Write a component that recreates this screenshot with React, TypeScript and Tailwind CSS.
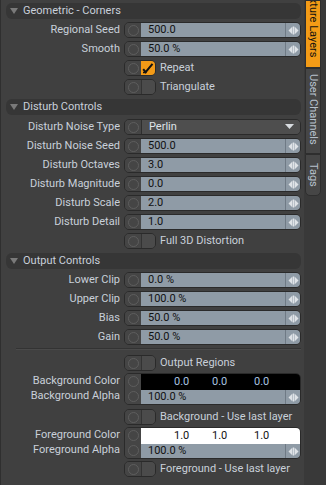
import React from "react";

const font = { fontFamily: "Roboto, 'Liberation Sans', sans-serif" };

function Arrows() {
  return (
    <div className="flex w-[15px] shrink-0 items-center justify-center border-l border-[#6f7a85] bg-[#8f9ba6]">
      <svg width="11" height="9" viewBox="0 0 11 9">
        <path d="M4.5 0.5 L0.5 4.5 L4.5 8.5 Z" fill="#dfe3e7" />
        <rect x="5" y="0.5" width="1" height="8" fill="#dfe3e7" />
        <path d="M6.5 0.5 L10.5 4.5 L6.5 8.5 Z" fill="#dfe3e7" />
      </svg>
    </div>
  );
}

function Knob() {
  return (
    <div className="flex w-[16px] shrink-0 items-center justify-center bg-[#454545]">
      <div className="h-[11px] w-[11px] rounded-full border border-[#5e5e5e]" />
    </div>
  );
}

function Label({ text }: { text: string }) {
  return (
    <div className="w-[119px] shrink-0 truncate text-right text-[11px] text-[#c9d0da]">{text}</div>
  );
}

function NumRow({ label, value, mt = "mt-[3px]" }: { label: string; value: string; mt?: string }) {
  return (
    <div className={`flex h-[16px] items-center ${mt}`}>
      <Label text={label} />
      <div className="ml-[4px] flex h-[16px] w-[177px] overflow-hidden rounded-[5px] border border-[#2a2a2a]">
        <Knob />
        <div className="flex flex-1 items-center bg-[#8f9ba6] pl-[7px] text-[11px] text-[#111]">{value}</div>
        <Arrows />
      </div>
    </div>
  );
}

function DropRow({ label, value }: { label: string; value: string }) {
  return (
    <div className="mt-[4px] flex h-[16px] items-center">
      <Label text={label} />
      <div className="ml-[4px] flex h-[16px] w-[177px] overflow-hidden rounded-[5px] border border-[#2a2a2a]">
        <Knob />
        <div className="flex flex-1 items-center justify-between border-l border-[#2e2e2e] bg-[#4e4e4e] pl-[7px] pr-[6px] text-[11px] text-[#dfe3e8]">
          <span>{value}</span>
          <svg width="9" height="6" viewBox="0 0 9 6">
            <path d="M0 0 L9 0 L4.5 5 Z" fill="#d8dce0" />
          </svg>
        </div>
      </div>
    </div>
  );
}

function Toggle({ label, checked = false, mt = "mt-[3px]" }: { label: string; checked?: boolean; mt?: string }) {
  return (
    <div className={`flex h-[16px] items-center ${mt}`}>
      <div className="w-[119px] shrink-0" />
      <div className="ml-[4px] flex h-[16px] w-[32px] overflow-hidden rounded-[5px] border border-[#2a2a2a]">
        <Knob />
        {checked ? (
          <div className="flex flex-1 items-center justify-center bg-[#f29a17]">
            <svg width="12" height="11" viewBox="0 0 12 11">
              <path d="M10.5 0.8 L3.6 9.2 L1.2 6.2" stroke="#111" strokeWidth="2" fill="none" />
              <path d="M1 9.5 L4.5 9.5" stroke="#111" strokeWidth="1.6" />
            </svg>
          </div>
        ) : (
          <div className="flex-1 border-l border-[#333] bg-[#4b4b4b]" />
        )}
      </div>
      <span className="ml-[4px] text-[11px] text-[#c9d0da]">{label}</span>
    </div>
  );
}

function Header({ title, mt }: { title: string; mt: string }) {
  return (
    <div className={`ml-[5px] flex h-[16px] w-[295px] items-center rounded-[6px] bg-[#363636] ${mt}`}>
      <svg className="ml-[4px]" width="8" height="6" viewBox="0 0 8 6">
        <path d="M0 0 L8 0 L4 6 Z" fill="#7a7a7a" />
      </svg>
      <span className="ml-[5px] text-[11px] text-[#c9d0da]">{title}</span>
    </div>
  );
}

function ColorGroup({ label, alpha, values, dark, mt }: { label: string; alpha: string; values: string[]; dark: boolean; mt: string }) {
  return (
    <div className={`flex ${mt}`}>
      <div className="flex w-[119px] shrink-0 flex-col">
        <div className="flex h-[16px] items-center justify-end text-[11px] text-[#c9d0da]">{label}</div>
        <div className="flex h-[15px] items-center justify-end text-[11px] text-[#c9d0da]">
          {label.replace("Color", "Alpha")}
        </div>
      </div>
      <div className="ml-[4px] flex h-[32px] w-[177px] overflow-hidden rounded-[5px] border border-[#2a2a2a]">
        <div className="flex w-[16px] shrink-0 flex-col bg-[#454545]">
          <div className="flex h-[16px] items-center justify-center">
            <div className="h-[11px] w-[11px] rounded-full border border-[#5e5e5e]" />
          </div>
          <div className="flex h-[15px] items-center justify-center">
            <div className="h-[11px] w-[11px] rounded-full border border-[#5e5e5e]" />
          </div>
        </div>
        <div className="flex flex-1 flex-col">
          <div
            className={`flex h-[16px] items-center text-[11px] ${dark ? "bg-black text-[#a9c4e0]" : "bg-white text-[#111]"}`}
          >
            <span className="ml-[33px] w-[38px]">{values[0]}</span>
            <span className="w-[42px]">{values[1]}</span>
            <span>{values[2]}</span>
          </div>
          <div className="flex h-[15px]">
            <div className="flex flex-1 items-center bg-[#8f9ba6] pl-[7px] text-[11px] text-[#111]">{alpha}</div>
            <Arrows />
          </div>
        </div>
      </div>
    </div>
  );
}

function Tab({ text, active, h, last }: { text: string; active?: boolean; h: string; last?: boolean }) {
  return (
    <div
      className={`flex w-[16px] flex-col items-center justify-end overflow-hidden border border-[#2e2e2e] ${h} ${
        active ? "bg-[#f39b16] text-[#111] pb-[10px]" : "bg-[#464646] text-[#b7c1cd] pb-[8px]"
      } ${last ? "rounded-b-[5px]" : ""}`}
    >
      <span className="shrink-0 whitespace-nowrap text-[11px] leading-[14px] [writing-mode:vertical-rl]">{text}</span>
    </div>
  );
}

export default function App() {
  return (
    <div className="flex h-[485px] w-[326px] overflow-hidden bg-[#404040]" style={font}>
      <div className="flex w-[304px] shrink-0 flex-col border-l border-[#2f2f2f]">
        <Header title="Geometric - Corners" mt="mt-[3px]" />
        <NumRow label="Regional Seed" value="500.0" />
        <NumRow label="Smooth" value="50.0 %" />
        <Toggle label="Repeat" checked />
        <Toggle label="Triangulate" />

        <Header title="Disturb Controls" mt="mt-[4px]" />
        <DropRow label="Disturb Noise Type" value="Perlin" />
        <NumRow label="Disturb Noise Seed" value="500.0" />
        <NumRow label="Disturb Octaves" value="3.0" />
        <NumRow label="Disturb Magnitude" value="0.0" />
        <NumRow label="Disturb Scale" value="2.0" />
        <NumRow label="Disturb Detail" value="1.0" />
        <Toggle label="Full 3D Distortion" />

        <Header title="Output Controls" mt="mt-[4px]" />
        <NumRow label="Lower Clip" value="0.0 %" />
        <NumRow label="Upper Clip" value="100.0 %" />
        <NumRow label="Bias" value="50.0 %" />
        <NumRow label="Gain" value="50.0 %" />

        <div className="ml-[15px] mt-[3px] w-[285px] border-t border-[#333] border-b border-b-[#4a4a4a]" />
        <Toggle label="Output Regions" mt="mt-[5px]" />
        <ColorGroup label="Background Color" alpha="100.0 %" values={["0.0", "0.0", "0.0"]} dark mt="mt-[2px]" />
        <Toggle label="Background - Use last layer" mt="mt-[4px]" />
        <ColorGroup label="Foreground Color" alpha="100.0 %" values={["1.0", "1.0", "1.0"]} dark={false} mt="mt-[2px]" />
        <Toggle label="Foreground - Use last layer" mt="mt-[2px]" />
      </div>
      <div className="flex w-[22px] flex-col bg-[#393939] pl-[1px]">
        <Tab text="Texture Layers" active h="h-[68px]" />
        <Tab text="User Channels" h="h-[86px]" />
        <Tab text="Tags" h="h-[42px]" last />
      </div>
    </div>
  );
}
